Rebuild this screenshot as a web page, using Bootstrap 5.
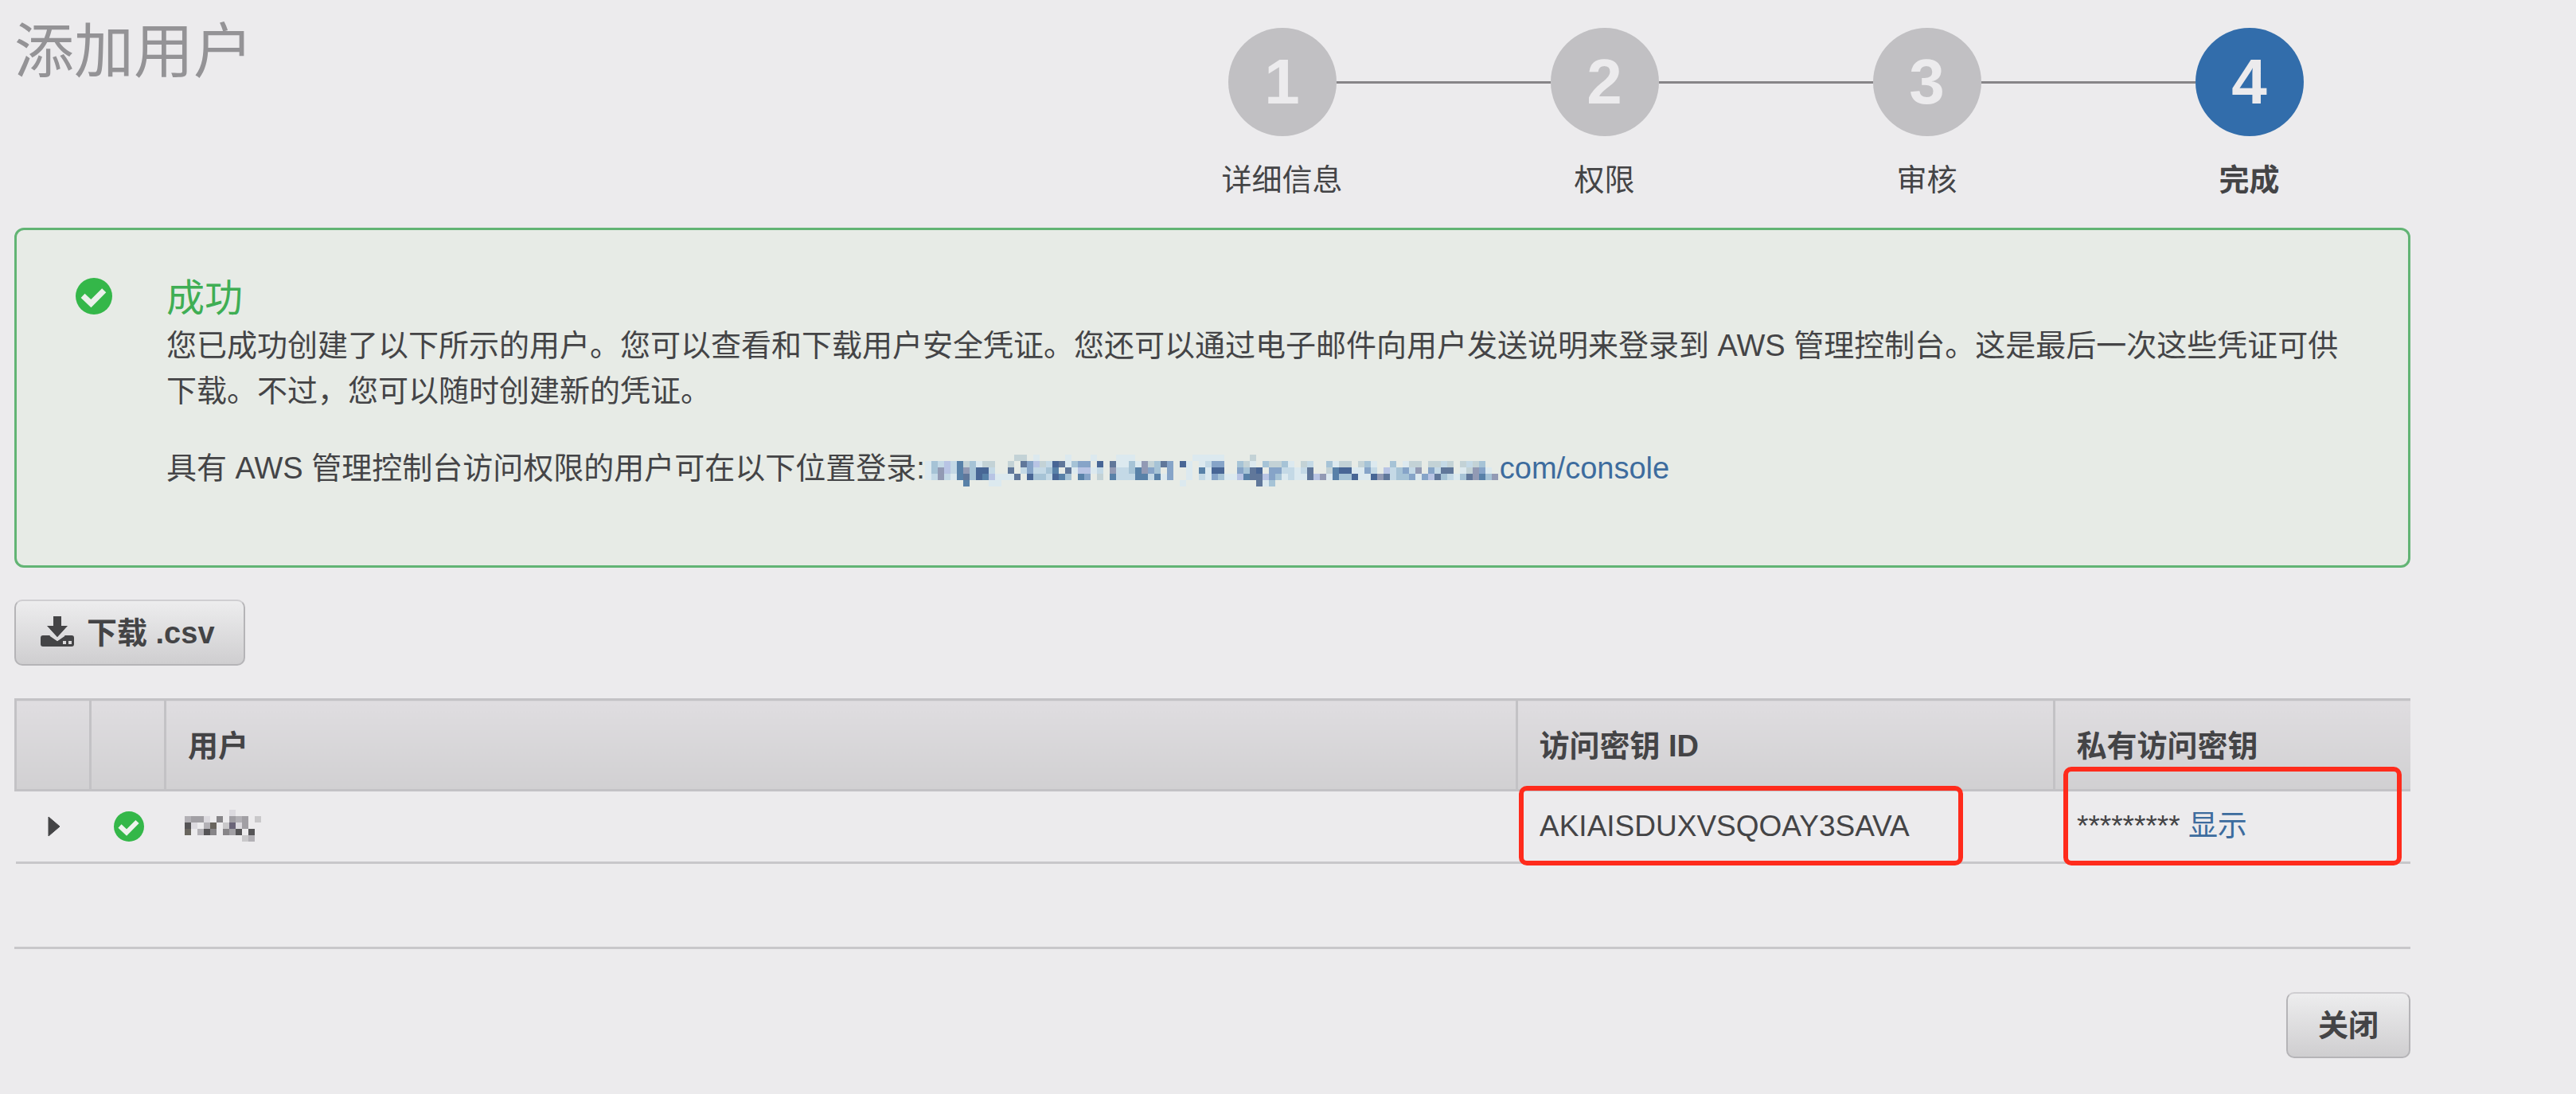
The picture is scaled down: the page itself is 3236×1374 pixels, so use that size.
<!DOCTYPE html>
<html lang="zh-CN">
<head>
<meta charset="utf-8">
<meta name="viewport" content="width=device-width, initial-scale=1">
<title>添加用户</title>
<link href="https://cdn.jsdelivr.net/npm/bootstrap@5.3.0/dist/css/bootstrap.min.css" rel="stylesheet">
<style>
  body { background: #ecebed; color: #444446; font-family: "Liberation Sans", "Noto Sans CJK SC", sans-serif; font-size: 38px; line-height: 57px; }
  .page { padding: 0 208px 40px 18px; }
  a { color: #3d6c9e; text-decoration: none; }

  .page-title { color: #949396; font-size: 75px; line-height: 90px; font-weight: 400; padding-top: 20px; }
  .steps { padding-top: 35px; padding-bottom: 31px; }
  .step { width: 405px; }
  .step-line { height: 3px; background: #878588; }
  .step:first-child .step-line:first-child, .step:last-child .step-line:last-child { background: none; }
  .step-num { width: 136px; height: 136px; background: #c1c0c3; color: #ecebed; font-size: 80px; font-weight: 700; line-height: 1; }
  .step-name { margin-top: 27px; }
  .step.active .step-num { background: #326dab; }
  .step.active .step-name { font-weight: 700; }

  .notice { background: #e7ebe6; border: 3px solid #62b474; border-radius: 12px; padding: 55px 68px 93px 74px; gap: 68px; }
  .notice h2 { color: #3fae54; font-size: 48px; line-height: 62px; font-weight: 400; }
  .notice p { margin-bottom: 40px; }
  .notice p:last-child { margin-bottom: 0; }
  .notice-icon { width: 46px; height: 46px; margin-top: 5px; }
  .url-mask { width: 722px; height: 40px; vertical-align: -10px; }

  .toolbar { padding: 40px 0 41px; }
  .btn-console { --bs-btn-color: #444446; --bs-btn-hover-color: #444446; border: 2px solid #b5b4b7; border-top-color: #cfced1; border-radius: 10px; background: linear-gradient(#ededee, #cfced0); font-size: 38px; line-height: 57px; font-weight: 700; padding: 12px 38px 10px; }
  .btn-console:hover { border-color: #a3a2a5; }
  .btn-console.download { padding-left: 31px; padding-right: 36px; gap: 16px; }
  .btn-console svg { width: 42px; height: 38px; margin-bottom: 6px; }

  .users { table-layout: fixed; border-bottom: 3px solid #c8c7ca; }
  .users th { height: 114px; border-top: 3px solid #c3c2c5; border-bottom: 3px solid #c3c2c5; border-left: 3px solid #c3c2c5; background: linear-gradient(#dfdde0, #d1d0d2); padding: 3px 24px 0 27px; }
  .users td { height: 91px; padding: 0 24px 2px 29px; font-size: 37px; position: relative; }
  .users .tool { padding: 0 0 0 3px; text-align: center; }
  .users .tool svg { display: block; margin: 0 auto; }
  .name-mask { width: 96px; height: 40px; display: block; margin-left: -5px; }
  .col-tool { width: 94px; }
  .col-key { width: 675px; }
  .col-secret { width: 448px; }

  .outline { position: absolute; border: 6px solid #ff2b1c; border-radius: 10px; pointer-events: none; }
  .outline-key { left: 3px; right: 114px; top: -7px; bottom: -5px; }
  .outline-secret { left: 12px; right: 11px; top: -31px; bottom: -5px; }

  .footer-bar { border-top: 3px solid #c8c7ca; margin-top: 104px; padding-top: 54px; }
</style>
</head>
<body>
<main class="page">
  <header class="d-flex justify-content-between align-items-start">
    <h1 class="page-title m-0">添加用户</h1>
    <ol class="steps list-unstyled d-flex m-0">
      <li class="step text-center">
        <div class="d-flex align-items-center"><span class="step-line flex-grow-1"></span><span class="step-num rounded-circle d-flex align-items-center justify-content-center">1</span><span class="step-line flex-grow-1"></span></div>
        <div class="step-name">详细信息</div>
      </li>
      <li class="step text-center">
        <div class="d-flex align-items-center"><span class="step-line flex-grow-1"></span><span class="step-num rounded-circle d-flex align-items-center justify-content-center">2</span><span class="step-line flex-grow-1"></span></div>
        <div class="step-name">权限</div>
      </li>
      <li class="step text-center">
        <div class="d-flex align-items-center"><span class="step-line flex-grow-1"></span><span class="step-num rounded-circle d-flex align-items-center justify-content-center">3</span><span class="step-line flex-grow-1"></span></div>
        <div class="step-name">审核</div>
      </li>
      <li class="step active text-center" aria-current="step">
        <div class="d-flex align-items-center"><span class="step-line flex-grow-1"></span><span class="step-num rounded-circle d-flex align-items-center justify-content-center">4</span><span class="step-line flex-grow-1"></span></div>
        <div class="step-name">完成</div>
      </li>
    </ol>
  </header>

  <section class="notice d-flex align-items-start" role="status">
    <svg class="notice-icon flex-shrink-0" viewBox="0 0 38 38" aria-hidden="true"><circle cx="19" cy="19" r="19" fill="#34b749"/><path d="M7.500 18.500L16 26.500L29.500 13" fill="none" stroke="#eaf0ea" stroke-width="6"/></svg>
    <div>
      <h2 class="m-0">成功</h2>
      <p>您已成功创建了以下所示的用户。您可以查看和下载用户安全凭证。您还可以通过电子邮件向用户发送说明来登录到 AWS 管理控制台。这是最后一次这些凭证可供下载。不过，您可以随时创建新的凭证。</p>
      <p>具有 AWS 管理控制台访问权限的用户可在以下位置登录:<a href="#"><svg class="url-mask" id="urlMask" viewBox="0 0 722 40" shape-rendering="crispEdges" aria-hidden="true"></svg>com/console</a></p>
    </div>
  </section>

  <div class="toolbar d-flex">
    <button type="button" class="btn btn-console download d-inline-flex align-items-center">
      <svg viewBox="0 0 42 38" aria-hidden="true"><path d="M16 0h10v12h8L21 26L8 12h8z" fill="#444446"/><path d="M3 24h9l9 7l9-7h9q3 0 3 3v8q0 3-3 3H3q-3 0-3-3v-8q0-3 3-3z" fill="#444446"/><path d="M28 31h4v4h-4zM35 31h4v4h-4z" fill="#d9d8da"/><path d="M12 24l9 6l9-6" fill="none" stroke="#dcdbdd" stroke-width="2"/><path d="M12 16h18L21 26z" fill="#444446"/></svg>
      <span>下载 .csv</span>
    </button>
  </div>

  <table class="users w-100">
    <colgroup><col class="col-tool"><col class="col-tool"><col><col class="col-key"><col class="col-secret"></colgroup>
    <thead>
      <tr><th class="tool"></th><th class="tool"></th><th scope="col">用户</th><th scope="col">访问密钥 ID</th><th scope="col">私有访问密钥</th></tr>
    </thead>
    <tbody>
      <tr>
        <td class="tool"><svg width="16" height="26" viewBox="0 0 16 26" aria-hidden="true"><path d="M1 1L15 13L1 25z" fill="#444446" stroke="#444446" stroke-linejoin="round"/></svg></td>
        <td class="tool"><svg width="38" height="38" viewBox="0 0 38 38" aria-hidden="true"><circle cx="19" cy="19" r="19" fill="#34b749"/><path d="M7.500 18.500L16 26.500L29.500 13" fill="none" stroke="#eef3ee" stroke-width="6"/></svg></td>
        <td><svg class="name-mask" id="nameMask" viewBox="0 0 96 40" shape-rendering="crispEdges" aria-hidden="true"></svg></td>
        <td>AKIAISDUXVSQOAY3SAVA<span class="outline outline-key"></span></td>
        <td>********* <a href="#">显示</a><span class="outline outline-secret"></span></td>
      </tr>
    </tbody>
  </table>

  <footer class="footer-bar d-flex justify-content-end">
    <button type="button" class="btn btn-console">关闭</button>
  </footer>
</main>
<script>
  // Fills a masked value with 8px blocks; each letter is a colour, a dot is empty.
  function drawMask(id, rows, colours) {
    var svg = document.getElementById(id);
    rows.forEach(function (row, y) {
      row.split('').forEach(function (key, x) {
        if (!colours[key]) return;
        var cell = document.createElementNS('http://www.w3.org/2000/svg', 'rect');
        cell.setAttribute('x', x * 8);
        cell.setAttribute('y', y * 8);
        cell.setAttribute('width', 8);
        cell.setAttribute('height', 8);
        cell.setAttribute('fill', colours[key]);
        svg.appendChild(cell);
      });
    });
  }
  drawMask('urlMask', [
    '..............gg.a....a...a...aaa.........aaaaa....g..........',
    'acbhbegcagg..g.jdhgbfjacdd.f.jaacaigcjd.fa.abdd..cga.cggca.gb..cagg.gca..c.agg.ggbg.gbgc..',
    'acihbeicffb..j.bdbbce.jahhab.ibbceidc.d..a.eaff..dcjf.ddbbabj..geffaadb.hbcdbi.dbjj.agida.',
    'abibaejcfehaaaj.fccbfec.ed.g.ebbbeebead..a.badcaahejjhdcabaajhiaeccfaafijbccdadhjcbacjieci',
    '......e...aa............................a...........jac..........'
  ], { a: '#dce9ef', b: '#c4d9e6', c: '#a6c3d6', d: '#86a4c8', e: '#5881a8', f: '#486695', g: '#c3d2d6', h: '#b8c4e4', i: '#929ab4', j: '#60779a' });
  drawMask('nameMask', [
    '.......h....',
    'feeh.d.efe.g',
    'ah.fb.gche..',
    'b.fad.dea.a.',
    '.........gf.'
  ], { a: '#555456', b: '#69655e', c: '#6a6478', d: '#878588', e: '#a19fa4', f: '#b2b0b5', g: '#c9c8ca', h: '#dcdadf' });
</script>
<script src="https://cdn.jsdelivr.net/npm/bootstrap@5.3.0/dist/js/bootstrap.bundle.min.js"></script>
</body>
</html>
